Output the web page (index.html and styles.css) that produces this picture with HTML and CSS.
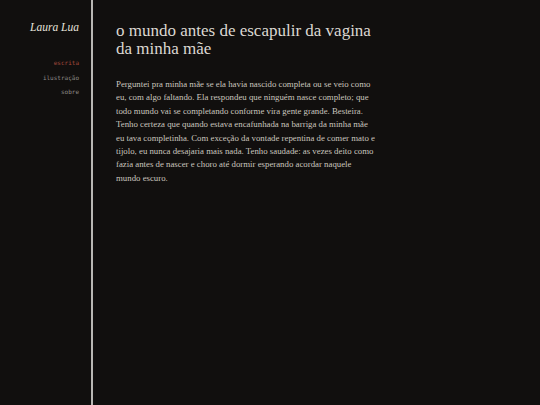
FILE: index.html
```html
<!DOCTYPE html>
<html lang="pt">
<head>
<meta charset="utf-8">
<title>Laura Lua</title>
<link rel="stylesheet" href="styles.css">
</head>
<body>
<div class="page">
  <aside class="sidebar">
    <h1 class="brand">Laura Lua</h1>
    <nav class="nav">
      <a class="nav-link active" href="#">escrita</a>
      <a class="nav-link" href="#">ilustração</a>
      <a class="nav-link" href="#">sobre</a>
    </nav>
  </aside>
  <main class="content">
    <h2 class="title">o mundo antes de escapulir da vagina da minha mãe</h2>
    <p class="text">Perguntei pra minha mãe se ela havia nascido completa ou se veio como eu, com algo faltando. Ela respondeu que ninguém nasce completo; que todo mundo vai se completando conforme vira gente grande. Besteira. Tenho certeza que quando estava encafunhada na barriga da minha mãe eu tava completinha. Com exceção da vontade repentina de comer mato e tijolo, eu nunca desajaria mais nada. Tenho saudade: as vezes deito como fazia antes de nascer e choro até dormir esperando acordar naquele mundo escuro.</p>
  </main>
</div>
</body>
</html>
```
FILE: styles.css
```css
html, body {
  margin: 0;
  padding: 0;
  background: #110f0e;
  height: 100%;
}
.page {
  display: flex;
  min-height: 405px;
}
.sidebar {
  flex: none;
  width: 93px;
  box-sizing: border-box;
  border-right: 2px solid #b9b7b4;
  padding-right: 12px;
  display: flex;
  flex-direction: column;
  align-items: flex-end;
}
.brand {
  margin: 20px 0 0 0;
  font-family: "Liberation Serif", serif;
  font-style: italic;
  font-weight: normal;
  font-size: 11.5px;
  line-height: 14px;
  color: #e6e2dc;
}
.nav {
  margin-top: 22px;
  display: flex;
  flex-direction: column;
  align-items: flex-end;
}
.nav-link {
  font-family: "DejaVu Sans Mono", monospace;
  font-size: 6px;
  line-height: 14.5px;
  color: #8d8a86;
  text-decoration: none;
}
.nav-link.active {
  color: #a2493c;
}
.content {
  padding: 22px 0 0 23px;
}
.title {
  margin: 0;
  width: 265px;
  font-family: "Liberation Serif", serif;
  font-weight: normal;
  font-size: 17px;
  line-height: 18px;
  color: #dcd8d2;
}
.text {
  margin: 20px 0 0 0;
  width: 260px;
  font-family: "Liberation Serif", serif;
  font-size: 8.8px;
  line-height: 13.4px;
  color: #c9c5be;
}
```
